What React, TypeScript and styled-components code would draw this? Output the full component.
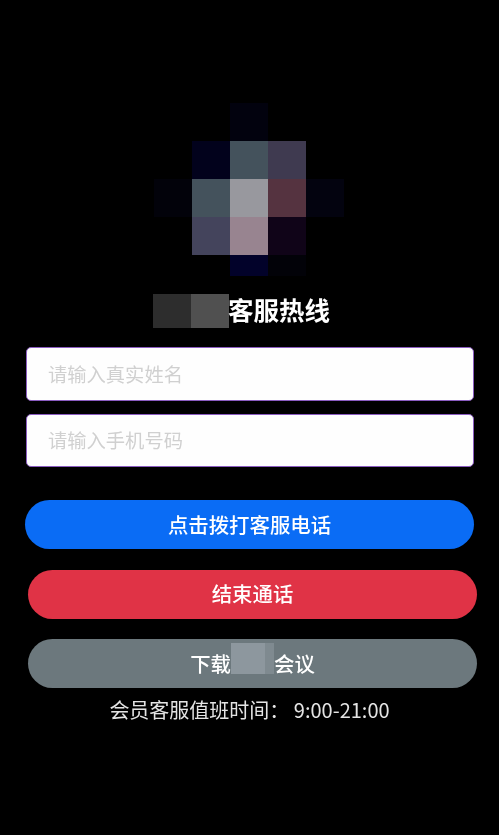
import React from 'react';
import styled, { createGlobalStyle } from 'styled-components';

const mosaicRows: { height: number; cells: (string | null)[] }[] = [
  { height: 38, cells: [null, null, '#02020e', null, null] },
  { height: 38, cells: [null, '#02021c', '#44525c', '#3f3a50', null] },
  { height: 38, cells: ['#02020a', '#44525c', '#98989e', '#553340', '#03030f'] },
  { height: 38, cells: [null, '#44445c', '#988490', '#100418', null] },
  { height: 21, cells: [null, null, '#02022a', '#020208', null] },
];

const GlobalStyle = createGlobalStyle`
  html, body {
    margin: 0;
    padding: 0;
    background: #000;
  }

  * {
    box-sizing: border-box;
  }
`;

const Page = styled.div`
  width: 499px;
  height: 835px;
  overflow: hidden;
  background: #000;
  padding-top: 103px;
  display: flex;
  flex-direction: column;
  font-family: 'Noto Sans CJK SC', 'Liberation Sans', sans-serif;
  filter: blur(0.6px);
`;

const Mosaic = styled.div`
  align-self: center;
  margin-left: -2px;
  display: flex;
  flex-direction: column;
`;

const MosaicRow = styled.div<{ $height: number }>`
  display: grid;
  grid-template-columns: repeat(5, 38px);
  height: ${({ $height }) => $height}px;
`;

const MosaicCell = styled.div<{ $color: string | null }>`
  background: ${({ $color }) => $color ?? 'transparent'};
`;

const Title = styled.h1`
  margin: 18px 0 0 153px;
  height: 34px;
  display: flex;
  align-items: center;
  font-size: 25.5px;
  font-weight: 700;
  line-height: 34px;
  color: #fff;
`;

const TitleMask = styled.span<{ $color: string }>`
  width: 38px;
  height: 34px;
  background: ${({ $color }) => $color};
`;

const TitleText = styled.span`
  margin: 0 0 4px -1px;
`;

const Form = styled.div`
  margin: 19px 0 0 26px;
  width: 448px;
  display: flex;
  flex-direction: column;
  gap: 13px;
`;

const Field = styled.input`
  display: block;
  width: 100%;
  height: 53.5px;
  padding: 0 21px;
  border: 1.5px solid #8a5cc0;
  border-radius: 5px;
  outline: none;
  background: #fefefe;
  font-family: inherit;
  font-size: 19.3px;

  &::placeholder {
    color: #d0d0d0;
    opacity: 1;
  }
`;

const Actions = styled.div`
  margin-top: 33px;
  display: flex;
  flex-direction: column;
  gap: 20.5px;
`;

const PillButton = styled.button<{ $color: string; $offset: number }>`
  width: 449px;
  height: 49px;
  margin-left: ${({ $offset }) => $offset}px;
  padding: 0 0 2px;
  border: none;
  border-radius: 25px;
  background: ${({ $color }) => $color};
  color: #fff;
  font-family: inherit;
  font-size: 20.4px;
  font-weight: 500;
  display: flex;
  align-items: center;
  justify-content: center;
`;

const ButtonMask = styled.span`
  width: 43px;
  height: 31px;
  margin: 0 0 8px;
  background: linear-gradient(90deg, #8d979e 0 34px, #7f8a90 34px);
`;

const Hours = styled.p`
  margin: 8px 0 0;
  text-align: center;
  font-size: 20px;
  line-height: 28px;
  color: #e4e4e4;
`;

const App: React.FC = () => (
  <Page>
    <GlobalStyle />
    <Mosaic>
      {mosaicRows.map((row, y) => (
        <MosaicRow key={y} $height={row.height}>
          {row.cells.map((color, x) => (
            <MosaicCell key={x} $color={color} />
          ))}
        </MosaicRow>
      ))}
    </Mosaic>
    <Title>
      <TitleMask $color="#2d2d2d" />
      <TitleMask $color="#505050" />
      <TitleText>客服热线</TitleText>
    </Title>
    <Form>
      <Field placeholder="请输入真实姓名" />
      <Field placeholder="请输入手机号码" />
    </Form>
    <Actions>
      <PillButton $color="#0a6cf5" $offset={25}>点击拨打客服电话</PillButton>
      <PillButton $color="#e03346" $offset={28}>结束通话</PillButton>
      <PillButton $color="#6c787d" $offset={28}>
        下载
        <ButtonMask />
        会议
      </PillButton>
    </Actions>
    <Hours>会员客服值班时间： 9:00-21:00</Hours>
  </Page>
);

export default App;
